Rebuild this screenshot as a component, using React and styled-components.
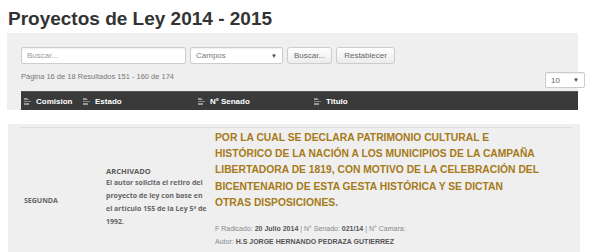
import React from "react";
import styled, { createGlobalStyle } from "styled-components";

const GlobalStyle = createGlobalStyle`
  body {
    margin: 0;
    background: #fff;
    font-family: "Liberation Sans", Arial, sans-serif;
    overflow: hidden;
  }
`;

const Page = styled.div`
  width: 591px;
  height: 252px;
  overflow: hidden;
`;

const Title = styled.h1`
  margin: 8px 0 0 8px;
  font-size: 19px;
  line-height: 22px;
  font-weight: bold;
  color: #333;
`;

const SearchPanel = styled.div`
  margin: 3px 0 0 7px;
  width: 557px;
  padding: 14px 0 0 14px;
  background: #efefef;
`;

const Controls = styled.div`
  display: flex;
  gap: 4px;
`;

const Input = styled.div`
  box-sizing: border-box;
  width: ${(p) => p.$w}px;
  height: 17px;
  padding: 0 5px;
  display: flex;
  align-items: center;
  justify-content: space-between;
  background: #fff;
  border: 1px solid #ccc;
  border-radius: 2px;
  font-size: 8px;
  color: ${(p) => p.$color || "#999"};
  box-shadow: inset 0 1px 1px rgba(0, 0, 0, 0.06);
`;

const Arrow = styled.span`
  font-size: 6px;
  color: #444;
`;

const Button = styled.div`
  box-sizing: border-box;
  width: ${(p) => p.$w}px;
  height: 17px;
  display: flex;
  align-items: center;
  justify-content: center;
  background: linear-gradient(#fff, #ececec);
  border: 1px solid #ccc;
  border-radius: 3px;
  font-size: 8px;
  color: #666;
`;

const InfoRow = styled.div`
  display: flex;
  justify-content: space-between;
  align-items: flex-start;
  padding-top: 6px;
  height: 18px;
  margin-bottom: 3px;
`;

const Pager = styled.span`
  font-size: 7.5px;
  line-height: 14px;
  color: #777;
`;

const PerPage = styled(Input)`
  width: 40px;
  height: 16px;
  margin-top: 2px;
  margin-right: -7px;
  color: #666;
`;

const HeadBar = styled.div`
  display: flex;
  height: 19px;
  background: #3a3a3a;
  border-top: 1px solid #555;
  box-sizing: border-box;
`;

const HeadCell = styled.div`
  width: ${(p) => (p.$w ? `${p.$w}px` : "auto")};
  flex: ${(p) => (p.$w ? "none" : "1")};
  display: flex;
  align-items: center;
  gap: 5px;
  padding-left: 3px;
  font-size: 8px;
  font-weight: bold;
  color: #fff;
`;

const SortIcon = () => (
  <svg width="7" height="7" viewBox="0 0 7 7">
    <path d="M0 0h3l2 2H0z" fill="#999" />
    <path d="M0 3h7v1H0z" fill="#888" />
    <path d="M0 5h5v2H0z" fill="#999" />
  </svg>
);

const ResultPanel = styled.div`
  position: relative;
  margin: 14px 0 0 8px;
  width: 572px;
  height: 150px;
  padding-top: 3px;
  background: #efefef;
`;

const PagerTab = styled.div`
  position: absolute;
  top: -5px;
  right: 13px;
  width: 16px;
  height: 5px;
  background: #fff;
  border-radius: 0 0 3px 3px;
`;

const Row = styled.div`
  display: grid;
  grid-template-columns: 82px 107px 1fr;
  align-items: center;
  margin: 0 9px 0 13px;
  min-height: 146px;
  border-top: 1px solid #dcdcdc;
`;

const SmallCell = styled.div`
  align-self: center;
  padding: 0 0 ${(p) => p.$shift || 0}px 3px;
  font-family: "Open Sans", "Liberation Sans", sans-serif;
  font-size: 7px;
  line-height: 12.7px;
  font-weight: bold;
  color: #666;
`;

const Status = styled.div`
  font-size: 7.5px;
  color: #5a5a5a;
`;

const TitleCell = styled.div`
  align-self: start;
  padding: 2px 0 0 5px;
`;

const BillTitle = styled.div`
  font-size: 10.3px;
  line-height: 16.2px;
  font-weight: bold;
  color: #a67a18;
`;

const Meta = styled.div`
  margin-top: ${(p) => p.$top || 0}px;
  font-size: 7px;
  line-height: 13px;
  color: #888;

  b {
    color: #555;
  }
`;

export default function App() {
  return (
    <Page>
      <GlobalStyle />
      <Title>Proyectos de Ley 2014 - 2015</Title>
      <SearchPanel>
        <Controls>
          <Input $w={165}>Buscar...</Input>
          <Input $w={93} $color="#777">
            Campos <Arrow>▼</Arrow>
          </Input>
          <Button $w={45}>Buscar...</Button>
          <Button $w={59}>Restablecer</Button>
        </Controls>
        <InfoRow>
          <Pager>Página 16 de 18 Resultados 151 - 160 de 174</Pager>
          <PerPage>
            10 <Arrow>▼</Arrow>
          </PerPage>
        </InfoRow>
        <HeadBar>
          <HeadCell $w={56}>
            <SortIcon />
            Comision
          </HeadCell>
          <HeadCell $w={112}>
            <SortIcon />
            Estado
          </HeadCell>
          <HeadCell $w={113}>
            <SortIcon />
            Nº Senado
          </HeadCell>
          <HeadCell>
            <SortIcon />
            Titulo
          </HeadCell>
        </HeadBar>
      </SearchPanel>
      <ResultPanel>
        <PagerTab />
        <Row>
          <SmallCell>SEGUNDA</SmallCell>
          <SmallCell $shift={9}>
            <Status>ARCHIVADO</Status>
            El autor solicita el retiro del
            <br />
            proyecto de ley con base en
            <br />
            el artículo 155 de la Ley 5ª de
            <br />
            1992.
          </SmallCell>
          <TitleCell>
            <BillTitle>
              POR LA CUAL SE DECLARA PATRIMONIO CULTURAL E
              <br />
              HISTÓRICO DE LA NACIÓN A LOS MUNICIPIOS DE LA CAMPAÑA
              <br />
              LIBERTADORA DE 1819, CON MOTIVO DE LA CELEBRACIÓN DEL
              <br />
              BICENTENARIO DE ESTA GESTA HISTÓRICA Y SE DICTAN
              <br />
              OTRAS DISPOSICIONES.
            </BillTitle>
            <Meta $top={11}>
              F Radicado: <b>20 Julio 2014</b> | N° Senado: <b>021/14</b> | N°
              Camara:
            </Meta>
            <Meta>
              Autor: <b>H.S JORGE HERNANDO PEDRAZA GUTIERREZ</b>
            </Meta>
          </TitleCell>
        </Row>
      </ResultPanel>
    </Page>
  );
}
